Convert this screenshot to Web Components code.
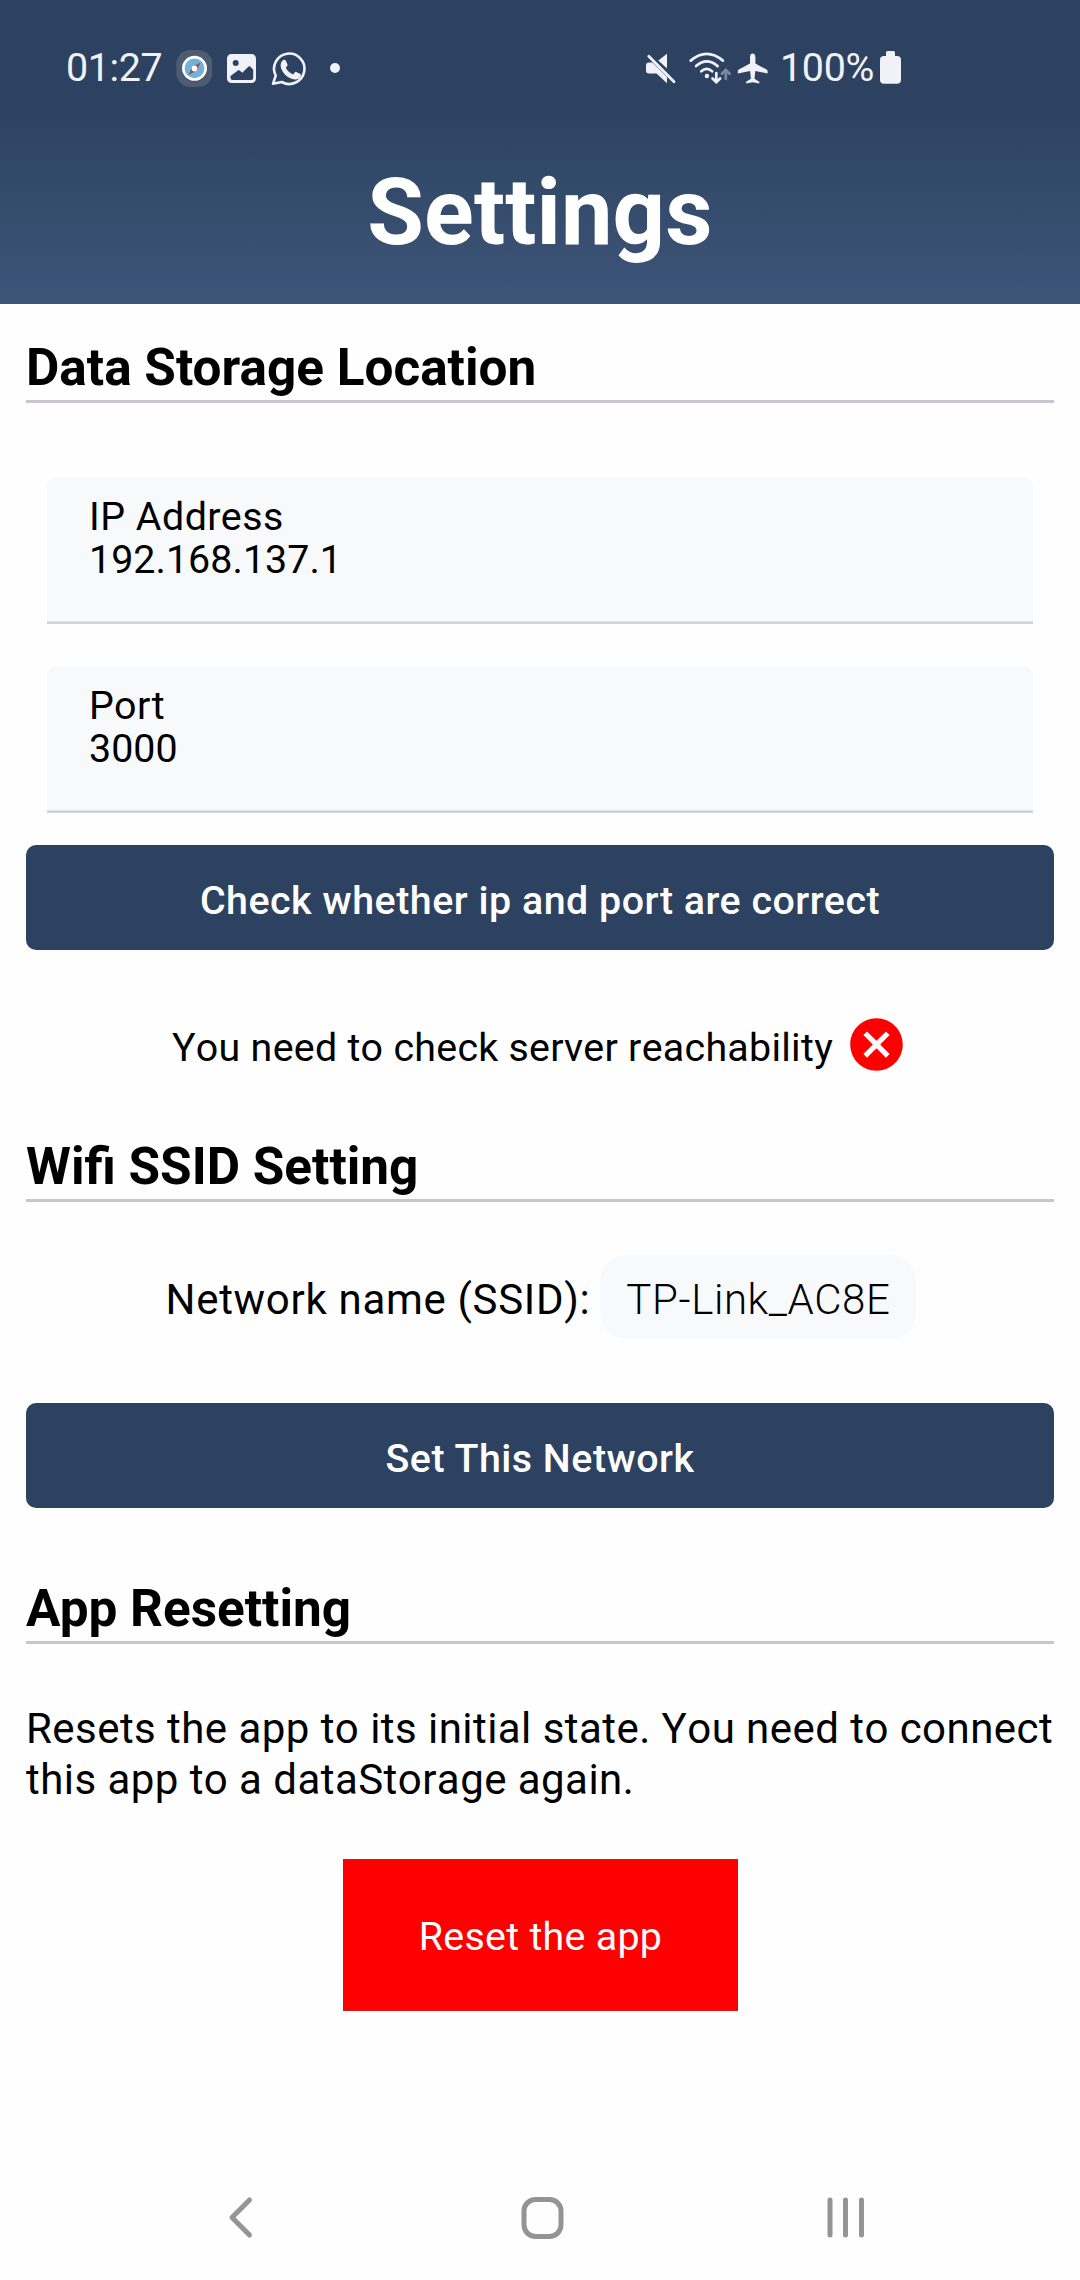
<!DOCTYPE html>
<html lang="en">
<head>
<meta charset="utf-8">
<title>Settings</title>
<style>
html,body{margin:0;padding:0;background:#fefefe}
body{font-family:Roboto,"Liberation Sans",sans-serif;color:#000;width:1080px;height:2280px;overflow:hidden}
</style>
</head>
<body>
<settings-screen></settings-screen>
<script>
const define = (name, html) => customElements.define(name, class extends HTMLElement {
  constructor() {
    super();
    const t = document.createElement('template');
    t.innerHTML = html;
    this.attachShadow({mode: 'open'}).append(t.content.cloneNode(true));
  }
});

define('status-bar', `
<style>
:host{display:flex;height:80px;padding:30px 0 0 66px;box-sizing:content-box;color:#f0f2f7;font-size:39.4px;line-height:76px}
span{display:block;white-space:nowrap}
.time{width:108px;letter-spacing:-.36px}
.pct{width:99px;margin-left:-1px;letter-spacing:-.3px}
svg{display:block;flex:none;fill:currentColor}
.gap{width:290px}
</style>
<span class="time">01:27</span>
<svg width="44" height="80" viewBox="174 30 44 80"><rect x="176.3" y="50" width="36" height="37" rx="14" fill="#4e5c70"/><circle cx="194.5" cy="69" r="12.8" fill="#3d4c62"/><circle cx="194.5" cy="68.3" r="11.2" fill="#72b2d8" stroke="#fff" stroke-width="2.6"/><path d="M188.5 75l3.8-8.7 4.4 4.4z" fill="#a34a52"/><path d="M200.5 62.500l-3.800 8.700-4.400-4.400z" fill="#a34a52"/><circle cx="194.500" cy="68.500" r="2.900" fill="#fff"/></svg>
<svg width="48" height="80" viewBox="218 30 48 80"><path fill-rule="evenodd" d="M231.500 54h20a4.500 4.500 0 0 1 4.500 4.500v20a4.500 4.500 0 0 1-4.500 4.500h-20a4.500 4.500 0 0 1-4.500-4.500v-20a4.500 4.500 0 0 1 4.500-4.500zM235.700 60a3 3 0 1 0 0 6a3 3 0 1 0 0-6zM230.500 76l7.400-5.600q.9-.6 1.700 0l2.700 2.300 6.200-6.100q.9-.7 1.700 0l3 3.100v8.300q0 2-2 2h-18.700q-2 0-2-2z"/></svg>
<svg width="50" height="80" viewBox="266 30 50 80"><path d="M273 83.800l2.700-8.200A15.200 15.200 0 1 1 281.800 82z" fill="none" stroke="currentColor" stroke-width="2.600" stroke-linejoin="round"/><path d="M282.800 60.300c.8-.7 2.400-.7 2.900.2l1.800 4c.3.8-.1 1.500-1.700 3.200 1.600 3.200 4 5.200 7.400 6.700 1.600-1.800 2.100-2.900 3-2.500l4.200 2c.8.4.7 1.300.3 2.300-.8 2.200-3.500 3.600-5.900 3.300-7-1.200-12.700-6.300-14.100-12.800-.4-2.600.6-4.900 2.100-6.400z"/></svg>
<svg width="38" height="80" viewBox="316 30 38 80"><circle cx="335" cy="68" r="5"/></svg>
<div class="gap"></div>
<svg width="42" height="80" viewBox="644 30 42 80"><path d="M667 53.800v14.700l-8.700-8zM649 62.600h3.500L667 77v6.300l-10.500-9.800H649q-3 0-3-3v-5q0-2.900 3-2.900z"/><path d="M648.800 56.200l25.200 25.500" stroke="currentColor" stroke-width="2.800" stroke-linecap="round"/></svg>
<svg width="46" height="80" viewBox="686 30 46 80"><g fill="none" stroke="currentColor" stroke-width="2.700" stroke-linecap="round"><path d="M690.700 60.600q16-13.600 32.200 0M696.100 66.100q10.600-9.300 21.500 0M701.300 71.300q5.400-4.700 10.800 0"/><path d="M716.300 73v8.500M712.500 78.500l3.800 3.700 3.800-3.700"/><path d="M725.800 79v-8.500M722 73.700l3.800-3.700 3.800 3.700" stroke="#7b88a0"/></g><circle cx="706.900" cy="76" r="2.200"/></svg>
<svg width="49" height="80" viewBox="732 30 49 80"><path d="M752.700 53.500q2.600 0 2.700 4.200v5.800l11.200 6.100q1 .6 1 1.900v2l-12.300-2.500-.8 7.700 4.800 3v1.800l-6.600-1.200-6.600 1.200v-1.800l4.800-3-.8-7.700-12.300 2.500v-2q0-1.300 1-1.900l11.200-6.100v-5.800q.1-4.200 2.700-4.200z"/></svg>
<span class="pct">100%</span>
<svg width="26" height="80" viewBox="879 30 26 80"><path d="M887.500 51h6q1.500 0 1.500 1.500V56h2q4 0 4 4v20q0 3.700-4 3.700h-13q-4 0-4-3.700V60q0-4 4-4h2v-3.500q0-1.500 1.500-1.500z"/></svg>
`);

define('app-header', `
<style>
:host{display:block;height:304px;background:linear-gradient(#2d4260 0,#2d4260 104px,#3d5579 304px)}
h1{margin:0;padding-top:48px;color:#fff;font-size:92px;line-height:110px;font-weight:700;text-align:center;letter-spacing:.13px}
</style>
<status-bar></status-bar>
<h1><slot></slot></h1>
`);

define('section-heading', `
<style>
:host{display:block;border-bottom:3px solid #cac4d0;padding-bottom:2px}
h2{margin:0;font-size:51.3px;line-height:62px;font-weight:700;position:relative;top:.5px}
</style>
<h2><slot></slot></h2>
`);

define('text-field', `
<style>
:host{display:block;box-sizing:border-box;height:147px;margin:0 21px;padding:18px 42px 0;background:#f8f9fb;border-radius:10px 10px 0 0;border-bottom:2px solid #ced4da;box-shadow:inset 0 -1px #dfe3e8;font-size:39.375px;line-height:43px}
.label{letter-spacing:.5px}
.value{letter-spacing:.05px}
</style>
<div class="label"><slot name="label"></slot></div>
<div class="value"><slot></slot></div>
`);

define('primary-button', `
<style>
:host{display:flex;height:105px;border-radius:10px;background:#2d4260}
button{all:unset;flex:1;text-align:center;color:#fff;font-size:39.375px;font-weight:500;line-height:105px;padding-top:3px;height:102px;letter-spacing:.51px}
</style>
<button><slot></slot></button>
`);

define('reach-status', `
<style>
:host{display:flex;justify-content:center;height:63px;line-height:63px;font-size:39.375px}
span{padding-top:3px;letter-spacing:.28px;margin-right:12px;font-kerning:none}
svg{display:block;fill:red}
</style>
<span><slot></slot></span>
<svg width="63" height="63" viewBox="0 0 24 24"><path d="M12 2C6.470 2 2 6.470 2 12s4.470 10 10 10 10-4.470 10-10S17.530 2 12 2zm5 13.590L15.590 17 12 13.410 8.410 17 7 15.590 10.590 12 7 8.410 8.410 7 12 10.590 15.590 7 17 8.410 13.410 12 17 15.590z"/></svg>
`);

define('network-row', `
<style>
:host{display:flex;justify-content:center;height:84px;line-height:84px;font-size:42px;padding-left:2px}
.label{padding-top:3px;letter-spacing:.69px;margin-right:10px}
.chip{box-sizing:border-box;width:316px;border-radius:26px;background:#f8f9fb;text-align:center;font-weight:300;letter-spacing:.6px;padding-top:3px}
</style>
<span class="label"><slot name="label"></slot></span>
<span class="chip"><slot></slot></span>
`);

define('danger-button', `
<style>
:host{display:flex;justify-content:center}
button{all:unset;box-sizing:border-box;width:395px;height:152px;padding:2px 0 0 1px;background:red;box-shadow:inset 0 1px #d01820,inset 0 -1px #d01820;color:#fff;font-size:39.375px;line-height:152px;letter-spacing:.28px;text-align:center}
</style>
<button><slot></slot></button>
`);

define('nav-bar', `
<style>
:host{display:flex;height:126px;align-items:center;justify-content:space-between;padding:0 213px 0 227px}
svg{display:block;fill:none;stroke:#949494;stroke-width:5;stroke-linecap:round;stroke-linejoin:round}
</style>
<svg width="28" height="44" viewBox="0 0 28 44"><path d="M22.500 5L5 22.500 22.500 40"/></svg>
<svg width="44" height="44" viewBox="-2 -.5 44 44"><rect x="4" y="4" width="37" height="37" rx="11.500" overflow="visible"/></svg>
<svg width="42" height="44" viewBox="0 0 42 44"><path d="M5 5v35M20.500 5v35M36.500 5v35"/></svg>
`.replace('display:block', 'display:block;overflow:visible'));

define('settings-screen', `
<style>
:host{display:flex;flex-direction:column;height:2280px}
main{flex:1;padding:0 26px}
p{margin:59px 0 54px;font-size:42px;line-height:51px;letter-spacing:.45px;font-kerning:none;white-space:nowrap}
</style>
<app-header>Settings</app-header>
<main>
<section-heading style="margin-top:32px">Data Storage Location</section-heading>
<text-field style="margin-top:74px"><span slot="label">IP Address</span>192.168.137.1</text-field>
<text-field style="margin-top:42px"><span slot="label">Port</span>3000</text-field>
<primary-button style="margin-top:32px">Check whether ip and port are correct</primary-button>
<reach-status style="margin-top:63px">You need to check server reachability</reach-status>
<section-heading style="margin-top:59px">Wifi SSID Setting</section-heading>
<network-row style="margin-top:53px"><span slot="label">Network name (SSID):</span>TP-Link_AC8E</network-row>
<primary-button style="margin-top:64px">Set This Network</primary-button>
<section-heading style="margin-top:69px">App Resetting</section-heading>
<p>Resets the app to its initial state. You need to connect<br>this app to a dataStorage again.</p>
<danger-button>Reset the app</danger-button>
</main>
<nav-bar></nav-bar>
`);
</script>
</body>
</html>
